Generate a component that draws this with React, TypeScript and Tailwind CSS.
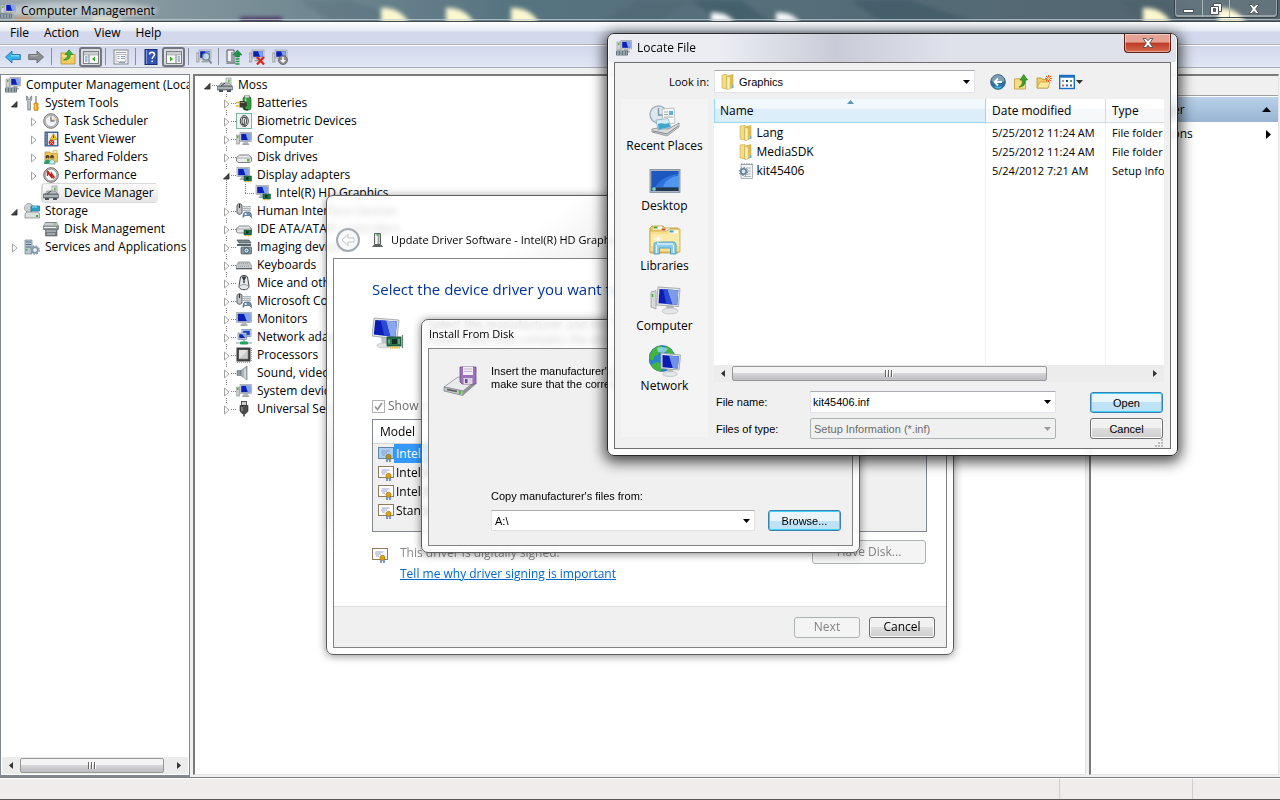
import type { ReactNode } from 'react';

/* ---------- icons ---------- */

type IconProps = { className?: string };

function Svg({ children, size = 16, className = '' }: { children: ReactNode; size?: number; className?: string }) {
  return (
    <svg viewBox={`0 0 ${size} ${size}`} width={size} height={size} className={`shrink-0 ${className}`} aria-hidden="true">
      {children}
    </svg>
  );
}

function Screen({ x = 3, y = 1, w = 12, h = 9 }: { x?: number; y?: number; w?: number; h?: number }) {
  return (
    <g>
      <path d={`M${x + w / 2 - 2} ${y + h}h4l1 3h-6z`} fill="#b9bdc0" />
      <rect x={x + w / 2 - 3.5} y={y + h + 2} width="7" height="1.4" fill="#9da2a6" />
      <rect x={x} y={y} width={w} height={h} fill="#d9dbdc" stroke="#8d9296" strokeWidth=".6" />
      <rect x={x + 1.2} y={y + 1.2} width={w - 2.4} height={h - 2.4} fill="#0a1fb8" />
      <path d={`M${x + w * 0.5} ${y + 1.2}H${x + w - 1.2}V${y + h - 1.2}H${x + w * 0.68}z`} fill="#7fa4f2" />
    </g>
  );
}

const ManagementIcon = ({ className }: IconProps) => (
  <Svg className={className}>
    <rect x="1" y="2" width="4" height="8" fill="#cfd3d5" stroke="#8e9498" strokeWidth=".6" />
    <rect x="2" y="3" width="1.5" height="2" fill="#5cb53a" />
    <Screen x={5} y={0.5} w={10.5} h={8.5} />
    <rect x="0" y="10.5" width="12" height="5" rx=".8" fill="#66757f" />
    <path d="M1 12h10M1 14h10" stroke="#c4ced4" strokeWidth="1" strokeDasharray="2 1" />
  </Svg>
);
const ToolsIcon = () => (
  <Svg>
    <path d="M2.500 1v4l1.300 1.400V15h2.600V6.400L7.700 5V1L6.300 2v2.300H4V2z" fill="#c9cdd0" stroke="#6f7579" strokeWidth=".8" />
    <path d="M12 1v7" stroke="#8b9094" strokeWidth="1.500" />
    <path d="M10.300 8h3.400l.6 2-.8 1 .8 1.500-.5 3h-3.600l-.5-3 .8-1.500-.8-1z" fill="#f3a51d" stroke="#b97008" strokeWidth=".6" />
    <path d="M11.300 9v6" stroke="#ffe08a" strokeWidth=".8" />
  </Svg>
);
const ClockIcon = () => (
  <Svg>
    <circle cx="8" cy="8" r="7.300" fill="#c8c8c8" stroke="#777" strokeWidth="1" />
    <circle cx="8" cy="8" r="5.600" fill="#f2f6fa" stroke="#8b8b8b" strokeWidth=".6" />
    <path d="M8 8l3.500-3.800A5.300 5.300 0 0 1 13 8z" fill="#f4cf9a" />
    <path d="M8 3.500V8h3.600" stroke="#4b5a66" strokeWidth="1.100" fill="none" />
  </Svg>
);
const EventIcon = () => (
  <Svg>
    <rect x="2" y="1" width="13" height="14" fill="#5577ae" stroke="#2e4978" strokeWidth=".8" />
    <rect x="5" y="2" width="9" height="12" fill="#e9eef6" />
    <path d="M1 3h3M1 6h3M1 9h3M1 12h3" stroke="#999" strokeWidth="1" />
    <path d="M10.500 2.500l3.500 6H7z" fill="#f6c612" stroke="#a77b05" strokeWidth=".5" />
    <path d="M10.500 4.500v2.500" stroke="#333" />
    <circle cx="8.500" cy="11.500" r="2.800" fill="#d32a22" />
    <path d="M7.500 10.500l2 2m0-2l-2 2" stroke="#fff" strokeWidth=".9" />
  </Svg>
);
const SharedIcon = () => (
  <Svg>
    <path d="M2 3h5l1 1.500h6.500V13H2z" fill="#efc758" stroke="#b48a26" strokeWidth=".7" />
    <path d="M10 1.500h4v3h-4z" fill="#fff2bd" stroke="#b48a26" strokeWidth=".5" />
    <circle cx="4.500" cy="8" r="2" fill="#5b3d25" />
    <circle cx="9" cy="8" r="2" fill="#5b3d25" />
    <path d="M4.500 8.500l1 1.500h-2zM9 8.500l1 1.500H8z" fill="#f2cfa4" />
    <path d="M1 15c0-3 2-4.500 3.700-4.500S7.500 12 7.500 15z" fill="#2a9c72" />
    <path d="M6 15c0-3 1.500-4.500 3.200-4.500S12 12 12 15z" fill="#d9e3ea" stroke="#2a9c72" strokeWidth=".6" />
  </Svg>
);
const PerformanceIcon = () => (
  <Svg>
    <circle cx="8" cy="8" r="7.300" fill="#bdbdbd" stroke="#6d6d6d" />
    <circle cx="8" cy="8" r="5.700" fill="#fff" stroke="#777" strokeWidth=".5" />
    <path d="M4.500 9V5l4 5V6.500l3 4.500" stroke="#d3221c" strokeWidth="1.500" fill="none" />
    <path d="M5 4l5.500 7.500" stroke="#8d1511" strokeWidth="1" />
  </Svg>
);
const DeviceIcon = () => (
  <Svg>
    <path d="M9 1h5v7H9z" fill="#e4e6e8" stroke="#8b9094" strokeWidth=".7" />
    <rect x="11" y="2.500" width="1.600" height="3" fill="#5cb53a" />
    <path d="M2 9l2-3h8l3 3z" fill="#b9bec2" stroke="#7a8086" strokeWidth=".6" />
    <rect x=".6" y="9" width="14.800" height="4" fill="#7b848b" stroke="#555d63" strokeWidth=".6" />
    <path d="M1 11h14" stroke="#d8dde0" />
    <path d="M2 13h4v2H2zM10 13h4v2h-4z" fill="#4a5157" />
    <path d="M4 9l4-3" stroke="#42484d" />
  </Svg>
);
const StorageIcon = () => (
  <Svg>
    <circle cx="5" cy="5" r="4.500" fill="#cfd4d7" stroke="#868d92" strokeWidth=".7" />
    <circle cx="5" cy="5" r="1.300" fill="#fff" stroke="#888" strokeWidth=".5" />
    <rect x="7" y="3" width="8.500" height="5" fill="#2aa0c9" stroke="#146f90" strokeWidth=".7" />
    <path d="M8 4h5" stroke="#a7e2f4" />
    <path d="M1 11l1.500-2h12l1 2v4H1z" fill="#dde0e2" stroke="#777d82" strokeWidth=".7" />
    <rect x="12" y="12" width="2" height="2" fill="#37ae32" />
  </Svg>
);
const DiskMgmtIcon = () => (
  <Svg>
    <path d="M2.500 1.500h11l2 3.500v3.500H.5V5z" fill="#8c9296" stroke="#666c70" strokeWidth=".7" />
    <path d="M2.500 2h11l1.500 2.500H1z" fill="#c9cdd0" />
    <path d="M1 6.500h12" stroke="#eceeef" />
    <path d="M2.500 9h11.500v6H2.500z" fill="#747a7f" stroke="#555b5f" strokeWidth=".6" />
    <path d="M3 10h10M4 13h8" stroke="#dfe1e3" strokeWidth=".9" />
    <rect x="10" y="2.500" width="3" height="1" fill="#6fc54b" />
  </Svg>
);
const ServicesIcon = () => (
  <Svg>
    <path d="M1 1h7v14H1z" fill="#bac7d0" stroke="#6e7f8b" strokeWidth=".7" />
    <path d="M2 3h5M2 5.500h5M2 8h5" stroke="#3f637b" strokeWidth=".9" />
    <rect x="2" y="10" width="1.500" height="1.500" fill="#37ae32" />
    <circle cx="11" cy="11" r="2.800" fill="#e7eef4" stroke="#7d97ad" strokeWidth="1.800" />
    <circle cx="11" cy="11" r="4.300" fill="none" stroke="#7d97ad" strokeWidth="1.200" strokeDasharray="1.800 1.600" />
  </Svg>
);
const BatteryIcon = () => (
  <Svg>
    <rect x="7" y="1.500" width="8" height="13.500" rx="2.500" fill="#2f9d3c" stroke="#1c5b25" strokeWidth=".7" />
    <rect x="8.500" y="0" width="5" height="3" rx="1" fill="#d5d8d5" stroke="#555" strokeWidth=".5" />
    <path d="M9.500 3.500v4" stroke="#a6e3a4" strokeWidth="1.500" />
    <path d="M3.500 6H8c2 0 3 1.500 3 3.200s-1 3.300-3 3.300H3.500z" fill="#3a3a33" />
    <path d="M4.500 7.500h4" stroke="#96968a" />
    <path d="M0 7.500h4M0 11h4" stroke="#d6b12b" strokeWidth="1.400" />
    <path d="M8 12c0 2 2 3 4 3" stroke="#222" strokeWidth="1.200" fill="none" />
  </Svg>
);
const BiometricIcon = () => (
  <Svg>
    <rect x=".5" y=".5" width="15" height="15" fill="#eef3f1" stroke="#7bb8a6" />
    <g fill="none" stroke="#333" strokeWidth=".9">
      <ellipse cx="8.300" cy="8" rx="4" ry="5.500" />
      <ellipse cx="8.300" cy="8" rx="2.400" ry="3.800" />
      <path d="M8.300 6v5M5 11l5 2M6 4l5 1" />
    </g>
  </Svg>
);
const ComputerIcon = () => (
  <Svg>
    <rect x="0" y="4" width="3.500" height="9" fill="#c9ced0" stroke="#868b8e" strokeWidth=".6" />
    <rect x="1" y="5" width="1.500" height="2" fill="#4db52d" />
    <Screen x={4} y={1.500} w={11.500} h={9} />
  </Svg>
);
const MonitorIcon = () => (
  <Svg>
    <Screen x={0.5} y={1.500} w={15} h={10} />
  </Svg>
);
const DriveIcon = () => (
  <Svg>
    <path d="M.5 8.500l3-2.500h9l3 2.500V12l-1.500 1.500H2L.5 12z" fill="#eceded" stroke="#6c7175" strokeWidth=".9" />
    <path d="M1 9h14" stroke="#a8adb0" />
    <rect x="11" y="10" width="2.500" height="2.500" fill="#52b53c" />
  </Svg>
);
const Chip = ({ x = 8, y = 9 }: { x?: number; y?: number }) => (
  <g>
    <rect x={x} y={y} width="7.500" height="5" fill="#147a49" stroke="#0b4a2b" strokeWidth=".5" />
    <rect x={x + 2} y={y + 1.2} width="2.500" height="2.500" fill="#10221a" />
    <path d={`M${x + 1} ${y + 5.6}h6`} stroke="#e0b32a" strokeWidth="1.200" strokeDasharray="1 .5" />
  </g>
);
const DisplayIcon = () => (
  <Svg>
    <Screen x={1} y={0.5} w={12.5} h={9} />
    <Chip />
  </Svg>
);
const IdeIcon = () => (
  <Svg>
    <path d="M.5 7.500l3-2.500h9l3 2.500v3.500l-1.500 1H2L.5 11z" fill="#e7e8e9" stroke="#6c7175" strokeWidth=".8" />
    <path d="M1 8h14" stroke="#a8adb0" />
    <Chip />
  </Svg>
);
const HidIcon = () => (
  <Svg>
    <path d="M1 3c0-3 5-3 5 0v6c0 3-5 3-5 0z" fill="#c2c6c9" stroke="#454a4e" strokeWidth=".9" />
    <path d="M3.500 1v4" stroke="#333" strokeWidth="1.200" />
    <path d="M7 3h8v5H7z" fill="#aeb6bd" />
    <path d="M7 4.500h8M7 6.500h8" stroke="#f5f6f7" strokeWidth=".9" strokeDasharray="1.500 .7" />
    <path d="M7 14.500c0-4 1-5.500 2.500-5.500h3.500c1.500 0 2.500 1.500 2.500 5.500l-2-2h-4.500z" fill="#6e8fae" stroke="#3c566e" strokeWidth=".6" />
    <circle cx="9.700" cy="11" r="1" fill="#fff" />
  </Svg>
);
const ImagingIcon = () => (
  <Svg>
    <path d="M1 1h12l2 3H3z" fill="#7f8b93" stroke="#40484d" strokeWidth=".7" />
    <path d="M1 5h14v2H1z" fill="#51646f" />
    <rect x="5" y="8" width="10.500" height="7" rx="1" fill="#8c9aa3" stroke="#414c54" strokeWidth=".7" />
    <circle cx="10.500" cy="11.500" r="2.600" fill="#e6f3fa" stroke="#2f4553" strokeWidth=".9" />
    <circle cx="10.500" cy="11.500" r="1" fill="#397eae" />
  </Svg>
);
const KeyboardIcon = () => (
  <Svg>
    <path d="M2.500 5h11l2.500 5v2H0v-2z" fill="#d0d3d5" stroke="#70767a" strokeWidth=".7" />
    <path d="M3 6.500h10M2.500 8h11M2 9.500h12" stroke="#8a9298" strokeWidth=".7" strokeDasharray="1.200 .8" />
    <path d="M0 11.500h16" stroke="#555b60" />
  </Svg>
);
const MouseIcon = () => (
  <Svg>
    <path d="M4.500 2c1-2 6-2 7 0l1.500 9c.5 5-10.500 5-10 0z" fill="#e7e8ea" stroke="#43484c" strokeWidth="1" />
    <path d="M5.500 1.500L8 6.500l2.500-5z" fill="#33373a" />
    <path d="M7 5.500h2V8H7z" fill="#5e6468" />
    <path d="M4 11c2-2 6-2 8 0" stroke="#999" fill="none" />
  </Svg>
);
const NetworkIcon = () => (
  <Svg>
    <rect x="6" y="0.500" width="9" height="7" fill="#d5e0ee" stroke="#6f85a8" strokeWidth=".7" />
    <rect x="7.200" y="1.700" width="6.600" height="4.600" fill="#1a3fc8" />
    <rect x="2" y="4" width="8.500" height="6.500" fill="#d5e0ee" stroke="#6f85a8" strokeWidth=".7" />
    <rect x="3.200" y="5.200" width="6.100" height="4" fill="#0b25ad" />
    <path d="M6 5.200h3.300v4z" fill="#8bacf2" />
    <path d="M0 14h16M8 11v3" stroke="#8b9aa0" strokeWidth="1.200" />
    <rect x="4" y="12.500" width="8" height="3" rx="1" fill="#18a65c" />
  </Svg>
);
const CpuIcon = () => (
  <Svg>
    <path d="M1 15.500h14M15.500 1v14" stroke="#c9a34a" strokeDasharray="1 1" />
    <rect x=".5" y=".5" width="14" height="14" fill="#3e3e3e" />
    <rect x="3" y="3" width="9" height="9" fill="#c9c9c9" stroke="#888" strokeWidth=".6" />
    <path d="M3 3h9L3 12z" fill="#e2e2e2" />
  </Svg>
);
const SoundIcon = () => (
  <Svg>
    <path d="M1 5.500h4v5H1z" fill="#8c979f" stroke="#5b656c" strokeWidth=".5" />
    <path d="M5 5.500L11 1v14l-6-4.500z" fill="#a9b4bb" stroke="#66717a" strokeWidth=".6" />
    <path d="M9 3.500v10" stroke="#e9eef1" strokeWidth="1.200" />
  </Svg>
);
const UsbIcon = () => (
  <Svg>
    <rect x="5.500" y="0.500" width="5" height="4" fill="#cdcdcd" stroke="#444" strokeWidth=".9" />
    <path d="M4 4.500h8V10l-2 2.500H6L4 10z" fill="#4c4c4c" stroke="#222" strokeWidth=".6" />
    <path d="M6 6v4" stroke="#aaa" />
    <path d="M8 12v3.500" stroke="#333" strokeWidth="1.500" />
  </Svg>
);
const CertificateIcon = ({ selected = false }: { selected?: boolean }) => (
  <Svg>
    <rect x=".5" y="1.500" width="15" height="11" fill={selected ? '#a9cff3' : '#fff'} stroke={selected ? '#6386a8' : '#927b5c'} />
    <path d="M3.500 5h8M3 7h6M4 9h3" stroke="#8a93c9" strokeWidth=".9" />
    <path d="M9 12v4M12 12v4" stroke="#3266c9" strokeWidth="1.300" />
    <circle cx="10.500" cy="10.800" r="2.600" fill={selected ? '#a39233' : '#dda117'} stroke="#9a6a06" strokeWidth=".6" />
  </Svg>
);
const FolderIcon = ({ className }: IconProps) => (
  <Svg className={className}>
    <path d="M2 1l5-.6V15l-5-1z" fill="#f3dc86" stroke="#c9a945" strokeWidth=".6" />
    <path d="M7 2l6-1.400v13L7 15.500z" fill="#e0bf57" stroke="#b9963a" strokeWidth=".5" />
    <path d="M7 2.500l3 .8V15l-3 .6z" fill="#fff0ae" stroke="#cdb057" strokeWidth=".4" />
    <path d="M12.700 11v3" stroke="#55b3e6" strokeWidth="1.200" />
  </Svg>
);
const IniIcon = () => (
  <Svg>
    <path d="M3 1.500h11.500v14H3z" fill="#f2f4f5" stroke="#8f979c" strokeWidth=".7" />
    <path d="M3 1h12" stroke="#777f84" strokeDasharray="1.500 1" />
    <path d="M8 5h5M9 8h4M9 11h4M6 13.500h7" stroke="#9ba4aa" strokeWidth=".8" />
    <circle cx="5.500" cy="8.500" r="2.700" fill="#dce8f1" stroke="#5e7d96" strokeWidth="1.600" />
    <circle cx="5.500" cy="8.500" r="4.200" fill="none" stroke="#5e7d96" strokeWidth="1" strokeDasharray="1.600 1.600" />
  </Svg>
);

/* toolbar */
const ArrowIcon = ({ forward = false }: { forward?: boolean }) => (
  <Svg>
    <path
      d={forward ? 'M15.500 8L9 2v3.500H.7v5H9V14z' : 'M.5 8L7 2v3.500h8.300v5H7V14z'}
      fill={forward ? '#8b8f92' : '#35b2ec'}
      stroke={forward ? '#65696c' : '#2477ab'}
      strokeWidth=".9"
    />
    <path d={forward ? 'M2 6.800h8' : 'M6 6.800h8'} stroke={forward ? '#b9bcbe' : '#a2e0fa'} strokeWidth="1" />
  </Svg>
);
const UpFolderIcon = () => (
  <Svg>
    <path d="M1 4h5l1.500 1.500H15V15H1z" fill="#f2cb61" stroke="#b5902f" strokeWidth=".8" />
    <path d="M2 7h12" stroke="#fdeebb" />
    <path d="M3.500 11c3-1 4-3 4-5.500H5L9 .8 13 5.500h-2.600c0 4-2.500 6-6.900 5.500z" fill="#3db534" stroke="#1f7a1b" strokeWidth=".6" />
  </Svg>
);
const PaneIcon = ({ right = false }: { right?: boolean }) => (
  <Svg>
    <rect x=".5" y="2.500" width="15" height="12" fill="#fafafa" stroke="#7b8085" />
    <path d="M1 4h14M1 5.800h14" stroke="#9298a0" strokeWidth=".9" />
    <path d={right ? 'M10 6v8' : 'M6 6v8'} stroke="#7b8085" />
    <path d={right ? 'M11.500 8h2.500M11.500 10h2.500M11.500 12h2.500' : 'M2 8h2.500M2 10h2.500M2 12h2.500'} stroke="#4a7bc5" />
    <path d={right ? 'M4 7.500v5L7 10z' : 'M12 7.500v5L9 10z'} fill="#38a820" />
  </Svg>
);
const PropertiesIcon = () => (
  <Svg>
    <rect x="1" y="1" width="14" height="14" fill="#f4f5f6" stroke="#858a90" />
    <path d="M3 3.500h10" stroke="#a2a8af" />
    <rect x="3" y="5.500" width="10" height="7" fill="#fff" stroke="#a5abb1" strokeWidth=".7" />
    <path d="M4.500 7.500h2M4.500 9.500h2M8 7.500h4M8 9.500h4M6 13.500h6" stroke="#7e92ab" strokeWidth=".9" />
  </Svg>
);
const HelpIcon = () => (
  <Svg>
    <rect x="2" y=".5" width="12" height="15" fill="#3454b4" stroke="#1b2e71" />
    <path d="M3.500 1v14" stroke="#7c97df" />
    <path d="M6.500 5.500c0-3 5-3 5 0 0 2-2.300 2-2.300 4.500M9.200 11.500v1.800" stroke="#fff" strokeWidth="1.500" fill="none" />
  </Svg>
);
const ScanIcon = () => (
  <Svg>
    <rect x="0" y="4" width="3" height="9" fill="#c9ced0" stroke="#777" strokeWidth=".5" />
    <Screen x={3} y={1} w={12} h={9} />
    <circle cx="10" cy="7.500" r="3.500" fill="#d5eaf8" fillOpacity=".85" stroke="#5d7588" strokeWidth="1.100" />
    <path d="M12.500 10.500l3 4" stroke="#7d868d" strokeWidth="2" />
  </Svg>
);
const UpdateIcon = () => (
  <Svg>
    <path d="M1 1h7v12H1z" fill="#eef0f1" stroke="#55595c" />
    <path d="M5 3h2v9H5z" fill="#97a09f" />
    <path d="M0 15h10l-1-2H1z" fill="#8d9396" />
    <path d="M11.500 1l4.500 5h-2.500v2h-4V6H7z" fill="#21924a" stroke="#0e6530" strokeWidth=".5" />
    <path d="M9.500 10h4M9.500 12.500h4M9.500 15h4" stroke="#21924a" strokeWidth="1.400" />
  </Svg>
);
const UninstallIcon = () => (
  <Svg>
    <rect x="0" y="4" width="3" height="9" fill="#c9ced0" stroke="#777" strokeWidth=".5" />
    <Screen x={3} y={1} w={12} h={8} />
    <path d="M8 8l7 7.500M15 8l-7 7.500" stroke="#db241c" strokeWidth="2.200" />
  </Svg>
);
const DisableIcon = () => (
  <Svg>
    <rect x="0" y="4" width="3" height="9" fill="#c9ced0" stroke="#777" strokeWidth=".5" />
    <Screen x={3} y={1} w={12} h={8} />
    <circle cx="11" cy="11" r="4.500" fill="#8c8c8c" stroke="#606060" strokeWidth=".8" />
    <path d="M10.200 8h1.600v3H14l-3 3-3-3h2.200z" fill="#fff" />
  </Svg>
);

/* file dialog */
const BackOrb = () => (
  <Svg>
    <circle cx="8" cy="8" r="7.400" fill="#2b719e" stroke="#44687f" strokeWidth=".9" />
    <path d="M1.500 7a6.500 6 0 0 1 13 0c-4 2-9 2-13 0z" fill="#7f9fb4" />
    <path d="M4 12.500c2 3 6 3 8 0z" fill="#3fb6e4" />
    <path d="M12 8H5M8 4.500L4.500 8 8 11.500" stroke="#fff" strokeWidth="1.800" fill="none" />
  </Svg>
);
const UpLevelIcon = () => (
  <Svg>
    <path d="M1.500 5l5-.5 1 1.500h5v9h-11z" fill="#f5dc80" stroke="#c09a34" strokeWidth=".8" />
    <path d="M6 13c3-1 3.500-4 3.300-7H7l3.700-5.500L14.500 6h-2.300c0 5-2 7-6.200 7z" fill="#37a627" stroke="#1e6d16" strokeWidth=".6" />
  </Svg>
);
const NewFolderIcon = () => (
  <Svg>
    <path d="M1 4h4.500l1 1.500H12V14H1z" fill="#efcb63" stroke="#b98f2c" strokeWidth=".8" />
    <path d="M1 14l3-6h10l-2 6z" fill="#fbe99c" stroke="#b98f2c" strokeWidth=".6" />
    <path d="M12.500 1v7M9 4.500h7M10 2l5 5M15 2l-5 5" stroke="#f0552a" strokeWidth="1" />
    <circle cx="12.500" cy="4.500" r="1.300" fill="#fff27c" />
  </Svg>
);
const ViewsIcon = () => (
  <Svg>
    <rect x=".7" y="1.500" width="14.600" height="13" fill="#fff" stroke="#1d6dc5" strokeWidth="1.400" />
    <path d="M0 2.500h16" stroke="#1d6dc5" strokeWidth="2.400" />
    <path d="M3 6h2v2H3z" fill="#9d9d9d" />
    <path d="M7 6h2v2H7z" fill="#1f3f93" />
    <path d="M11 6h2v2h-2z" fill="#48a348" />
    <path d="M3 10.500h2v2H3z" fill="#df5f45" />
    <path d="M7 10.500h2v2H7z" fill="#2d62bd" />
    <path d="M11 10.500h2v2h-2z" fill="#3b58a4" />
  </Svg>
);
const BigScreen = () => (
  <g>
    <path d="M17 20l6-1 3 6-8 1z" fill="#b6b9bc" />
    <ellipse cx="21" cy="26" rx="8" ry="3" fill="#e4e5e6" stroke="#b0b4b7" strokeWidth=".6" />
    <path d="M9 2l22 1.500-1.500 18L7.500 20z" fill="#e3e5e6" stroke="#999ea2" strokeWidth=".8" />
    <path d="M10.500 4l18.800 1.200L28.200 19.800 9.500 18.300z" fill="#0b1cb5" />
    <path d="M18 4.500l11.300.7L28.200 19.800l-5-.4z" fill="#7c9bea" />
    <path d="M14 4.200l4.500.3 4.800 14.900-6-.4z" fill="#2a49d4" />
  </g>
);
const BigComputer = () => (
  <Svg size={32}>
    <path d="M2 7l5-1.500V24l-5-2z" fill="#d6d8da" stroke="#94999d" strokeWidth=".7" />
    <path d="M3.500 9v3" stroke="#42b82c" strokeWidth="1.600" />
    <BigScreen />
  </Svg>
);
const BigDisplay = () => (
  <Svg size={32}>
    <path d="M9 20l8 1 2 6-9 1z" fill="#c0c3c6" />
    <ellipse cx="12" cy="28.500" rx="7" ry="2.500" fill="#e2e3e4" stroke="#b0b4b7" strokeWidth=".6" />
    <path d="M2 1l25 2-2 19L0 19z" fill="#e3e5e6" stroke="#999ea2" strokeWidth=".8" />
    <path d="M3.300 3L25 4.500 23.300 20 1.800 17.500z" fill="#0b1cb5" />
    <path d="M14 3.700L25 4.500 23.300 20l-5-.6z" fill="#88a5f0" />
    <path d="M8.500 3.300l5.500.4 4.300 15.700-6-.7z" fill="#2a49d4" />
    <rect x="15" y="20" width="14" height="9" fill="#24754d" stroke="#114a2e" strokeWidth=".8" />
    <rect x="20" y="22" width="5" height="5" fill="#152c20" />
    <path d="M17 22.500v4M27 22v5" stroke="#8ac1a4" strokeWidth="1.200" />
    <path d="M18 30.500h10" stroke="#dfb32d" strokeWidth="2" strokeDasharray="1.500 .6" />
    <path d="M30.500 18v13" stroke="#72777a" strokeWidth="1.200" />
  </Svg>
);
const BigNetwork = () => (
  <Svg size={32}>
    <circle cx="13" cy="13.500" r="13" fill="#2b83cb" stroke="#23639a" strokeWidth=".6" />
    <path d="M3 6C6 2 10 0 13 1c1 3-2 4-3 7s-5 2-5 5-3 2-4.500 1C0 11 1 8 3 6zM6 18c3-2 6 0 7 3s-1 4-1 5.500C8 26 4 24 2 20zM17 1c4 1 7 5 8 8l-5 1-4-4z" fill="#43b53c" />
    <path d="M8 3c4-2 9-1 11 1l-4 4-6-1z" fill="#a8e3f4" fillOpacity=".7" />
    <path d="M18 24l5-.5 2 4-6 .5z" fill="#b6b9bc" />
    <ellipse cx="21" cy="29" rx="7.500" ry="2.500" fill="#e4e5e6" stroke="#b0b4b7" strokeWidth=".6" />
    <path d="M12 8l19.500 2-1.500 15-18-1.500z" fill="#e3e5e6" stroke="#999ea2" strokeWidth=".8" />
    <path d="M13.500 10L30 11.500l-1.300 12-15.200-1.300z" fill="#0b1cb5" />
    <path d="M20 10.600l10 .9-1.300 12-5-.4z" fill="#6f92e8" />
  </Svg>
);
const BigDesktop = () => (
  <Svg size={32}>
    <rect x="1" y="4.500" width="30" height="23" fill="#a9b4c0" stroke="#7f8b97" strokeWidth=".8" />
    <rect x="2.500" y="6" width="27" height="20" fill="#2c74dc" />
    <path d="M2.500 6h27v3C18 10 9 16 6 23H2.500z" fill="#1c58bf" />
    <path d="M14 22c2-7 9-11 15.500-11v11z" fill="#5095ee" />
    <rect x="2.500" y="22.500" width="27" height="3.500" fill="#22384f" />
    <circle cx="5" cy="24" r="2" fill="#4fc2e6" />
    <circle cx="5" cy="24" r=".8" fill="#f5d447" />
  </Svg>
);
const BigLibraries = () => (
  <Svg size={32}>
    <path d="M1 3l2-2h11l2 2h13v25H1z" fill="#e9c867" stroke="#bd9a3b" strokeWidth=".8" />
    <path d="M4 1.500h9v3H4z" fill="#fff" />
    <path d="M4.500 1.500h4v2h-4z" fill="#32ae38" />
    <path d="M12 3.500h9v3h-9z" fill="#fff" />
    <path d="M12.500 3.500h4v2h-4z" fill="#d24a2f" />
    <path d="M1 6h17l2-2h11v23H1z" fill="#f7df8c" stroke="#c8a546" strokeWidth=".7" />
    <path d="M20 5.500h9v3h-9z" fill="#fff" />
    <path d="M20.500 5.500h4v2h-4z" fill="#31a0e2" />
    <path d="M2 9h28v12H2z" fill="#fbeaa8" />
    <path d="M5 29V20c0-2 1-3 3-3h16c2 0 3 1 3 3v9h-5.500v-6h-11v6z" fill="#8cccea" stroke="#4d9cc3" strokeWidth=".9" />
    <path d="M7.500 20v8M24.500 20v8M8 19h16" stroke="#d8f1fb" strokeWidth="1.300" />
    <path d="M9 10v8M5 14h8M6.500 11.500l5 5M11.500 11.500l-5 5" stroke="#fff" strokeWidth=".9" />
  </Svg>
);
const BigRecent = () => (
  <Svg size={32}>
    <circle cx="9.500" cy="9.500" r="8.500" fill="#dde7ee" stroke="#9fb0bc" strokeWidth="1.400" />
    <path d="M9.500 3v7h6" stroke="#7b91a0" strokeWidth="1.300" fill="none" />
    <path d="M13 4l12-1 1 15-12 2z" fill="#f7f8f9" stroke="#a8adb2" strokeWidth=".7" />
    <path d="M15 7h4M15 9.500h4M15 12h9" stroke="#99a2a9" strokeWidth=".9" />
    <path d="M20 6h4v4h-4z" fill="#5bb3d6" />
    <path d="M3 24l6-1 10 1 11-6v4l-12 9-15-4z" fill="#d9dbdd" stroke="#85898d" strokeWidth=".8" />
    <path d="M7 15l12-1.500 3 9-13 2.500z" fill="#d6eef9" stroke="#8297a3" strokeWidth=".6" />
    <path d="M9 19c4-2 6 1 11-1l1.500 4-12 2.500z" fill="#41a6cf" />
    <path d="M4 26l14 3 11-8" stroke="#7f8387" fill="none" />
  </Svg>
);
const FloppyDriveIcon = () => (
  <svg viewBox="0 0 36 32" width="36" height="32" className="shrink-0" aria-hidden="true">
    <path d="M1 22l14-10 17 4-12 10z" fill="#e9eaeb" stroke="#8b8f92" strokeWidth=".8" />
    <path d="M1 22l19 4v4.500L1 26z" fill="#c6c9cb" stroke="#808487" strokeWidth=".8" />
    <path d="M20 26l12-10v4L20 30.500z" fill="#8f9396" />
    <path d="M4 24.500l10 2" stroke="#55595c" strokeWidth="1.300" />
    <path d="M17 26v3" stroke="#4dc229" strokeWidth="2.400" />
    <path d="M17 2h16v17H19l-2-2z" fill="#9a72b9" stroke="#6f4a8e" strokeWidth=".8" />
    <path d="M20 2h10v8H20z" fill="#f0ebf4" />
    <path d="M21 4h8M21 6.500h8" stroke="#b8aac4" strokeWidth=".8" />
    <path d="M20.500 13h9v6h-9z" fill="#dcd4e4" />
    <path d="M22 14h2.500v4H22z" fill="#6f4a8e" />
  </svg>
);
const TowerIcon = () => (
  <Svg>
    <path d="M4.500 1.500h6v11h-6z" fill="#d7dad9" stroke="#5b5f60" />
    <path d="M5.500 3H7v9H5.500z" fill="#fff" />
    <path d="M8.500 4v8" stroke="#a3aca2" strokeWidth="1.500" />
    <path d="M6.500 3h3" stroke="#40a83a" strokeWidth="1.500" />
    <path d="M2 15h11l-1.500-2h-8z" fill="#5d6263" />
  </Svg>
);

const Down = ({ className = 'fill-black' }: IconProps) => (
  <svg viewBox="0 0 7 4" width="7" height="4" className={`shrink-0 ${className}`} aria-hidden="true">
    <path d="M0 0h7L3.500 4z" />
  </svg>
);

/* ---------- shared controls ---------- */

function PushButton({
  children,
  className = '',
  primary = false,
  disabled = false,
}: {
  children: ReactNode;
  className?: string;
  primary?: boolean;
  disabled?: boolean;
}) {
  const look = disabled
    ? 'border-[#adb2b5] bg-[#f4f4f4] text-[#838383]'
    : primary
      ? 'border-[#3c7fb1] bg-linear-to-b from-[#eaf5fb] from-50% to-[#bfe3f6] to-50% shadow-[inset_0_0_0_1px_#3fd0f8] text-black'
      : 'border-[#707070] bg-linear-to-b from-[#f1f1f1] from-45% via-[#dddddd] via-50% to-[#cfcfcf] shadow-[inset_0_0_0_1px_#fbfbfb] text-black';
  return (
    <button type="button" disabled={disabled} className={`flex items-center justify-center rounded-[3px] border ${look} ${className}`}>
      {children}
    </button>
  );
}

function ScrollBar({ thumb }: { thumb: string }) {
  return (
    <div className="flex h-[17px] shrink-0 items-center bg-[#ececec]">
      <button type="button" aria-label="Scroll left" className="flex w-[18px] shrink-0 items-center justify-center">
        <svg viewBox="0 0 4 7" width="4" height="7">
          <path d="M4 0v7L0 3.500z" fill="#333" />
        </svg>
      </button>
      <div className="flex h-full flex-1">
        <div
          className={`flex h-[15px] items-center justify-center gap-px self-center rounded-[2px] border border-[#979797] bg-linear-to-b from-[#f3f3f3] from-45% via-[#d5d5d8] via-50% to-[#bdbdc2] ${thumb}`}
        >
          <span className="h-[7px] w-[2px] border-r border-white bg-[#666]" />
          <span className="h-[7px] w-[2px] border-r border-white bg-[#666]" />
          <span className="h-[7px] w-[2px] border-r border-white bg-[#666]" />
        </div>
      </div>
      <button type="button" aria-label="Scroll right" className="flex w-[18px] shrink-0 items-center justify-center">
        <svg viewBox="0 0 4 7" width="4" height="7">
          <path d="M0 0v7l4-3.500z" fill="#333" />
        </svg>
      </button>
    </div>
  );
}

/* ---------- trees ---------- */

type Node = { label: string; icon: ReactNode; level: number; arrow?: 'open' | 'closed'; selected?: boolean; last?: boolean };

const consoleTree: Node[] = [
  { label: 'Computer Management (Local', icon: <ManagementIcon />, level: 0 },
  { label: 'System Tools', icon: <ToolsIcon />, level: 1, arrow: 'open' },
  { label: 'Task Scheduler', icon: <ClockIcon />, level: 2, arrow: 'closed' },
  { label: 'Event Viewer', icon: <EventIcon />, level: 2, arrow: 'closed' },
  { label: 'Shared Folders', icon: <SharedIcon />, level: 2, arrow: 'closed' },
  { label: 'Performance', icon: <PerformanceIcon />, level: 2, arrow: 'closed' },
  { label: 'Device Manager', icon: <DeviceIcon />, level: 2, selected: true },
  { label: 'Storage', icon: <StorageIcon />, level: 1, arrow: 'open' },
  { label: 'Disk Management', icon: <DiskMgmtIcon />, level: 2 },
  { label: 'Services and Applications', icon: <ServicesIcon />, level: 1, arrow: 'closed' },
];

const deviceTree: Node[] = [
  { label: 'Moss', icon: <DeviceIcon />, level: 1, arrow: 'open' },
  { label: 'Batteries', icon: <BatteryIcon />, level: 2, arrow: 'closed' },
  { label: 'Biometric Devices', icon: <BiometricIcon />, level: 2, arrow: 'closed' },
  { label: 'Computer', icon: <ComputerIcon />, level: 2, arrow: 'closed' },
  { label: 'Disk drives', icon: <DriveIcon />, level: 2, arrow: 'closed' },
  { label: 'Display adapters', icon: <DisplayIcon />, level: 2, arrow: 'open' },
  { label: 'Intel(R) HD Graphics', icon: <DisplayIcon />, level: 3 },
  { label: 'Human Interface Devices', icon: <HidIcon />, level: 2, arrow: 'closed' },
  { label: 'IDE ATA/ATAPI controllers', icon: <IdeIcon />, level: 2, arrow: 'closed' },
  { label: 'Imaging devices', icon: <ImagingIcon />, level: 2, arrow: 'closed' },
  { label: 'Keyboards', icon: <KeyboardIcon />, level: 2, arrow: 'closed' },
  { label: 'Mice and oth', icon: <MouseIcon />, level: 2, arrow: 'closed' },
  { label: 'Microsoft Co', icon: <HidIcon />, level: 2, arrow: 'closed' },
  { label: 'Monitors', icon: <MonitorIcon />, level: 2, arrow: 'closed' },
  { label: 'Network adap', icon: <NetworkIcon />, level: 2, arrow: 'closed' },
  { label: 'Processors', icon: <CpuIcon />, level: 2, arrow: 'closed' },
  { label: 'Sound, video', icon: <SoundIcon />, level: 2, arrow: 'closed' },
  { label: 'System devic', icon: <ComputerIcon />, level: 2, arrow: 'closed' },
  { label: 'Universal Seri', icon: <UsbIcon />, level: 2, arrow: 'closed', last: true },
];

function TreeCell({ node, lines, trunk }: { node?: Node; lines: boolean; trunk: boolean }) {
  const arrow = node?.arrow;
  return (
    <svg viewBox="0 0 19 18" width="19" height="18" className="shrink-0" aria-hidden="true">
      {trunk && <path d={node?.last ? 'M9.500 0v9' : 'M9.500 0v18'} stroke="#808080" strokeDasharray="1 1" />}
      {lines && <path d={arrow ? 'M14 9.500h5' : 'M9 9.500h10'} stroke="#808080" strokeDasharray="1 1" />}
      {lines && !arrow && node && <path d="M9.500 0v9" stroke="#808080" strokeDasharray="1 1" />}
      {arrow === 'closed' && (
        <>
          <rect x="6" y="4" width="8" height="11" fill="#fff" />
          <path d="M7.500 6v8L12 10z" fill="#fff" stroke="#a3a3a3" />
        </>
      )}
      {arrow === 'open' && (
        <>
          <rect x="5" y="4" width="9" height="9" fill="#fff" />
          <path d="M12 7.500V13H6.500z" fill="#454545" stroke="#202020" strokeWidth=".8" />
        </>
      )}
    </svg>
  );
}

function Tree({ nodes, lines = false }: { nodes: Node[]; lines?: boolean }) {
  return (
    <ul>
      {nodes.map((n) => (
        <li key={n.label} className="flex h-[18px] items-center whitespace-nowrap">
          {n.level >= 2 && (!lines || n.level === 2) && <span className="w-[19px] shrink-0" />}
          {lines && n.level === 3 && (
            <>
              <span className="w-[19px] shrink-0" />
              <TreeCell lines={false} trunk />
            </>
          )}
          {n.level > 0 && <TreeCell node={n} lines={lines} trunk={lines && n.level === 2} />}
          <span
            className={`flex h-[18px] items-center gap-[5px] rounded-[3px] ${
              n.selected ? 'bg-linear-to-b from-[#fafafa] to-[#e6e6e6] pr-1 shadow-[-1px_0_0_1px_#d9d9d9]' : ''
            }`}
          >
            {n.icon}
            {n.label}
          </span>
        </li>
      ))}
    </ul>
  );
}

/* ---------- main window ---------- */

const Separator = () => <span className="mx-1 h-[17px] w-px bg-[#8b8e9b]" />;

function ToolButton({ label, pressed = false, children }: { label: string; pressed?: boolean; children: ReactNode }) {
  return (
    <button
      type="button"
      aria-label={label}
      className={
        pressed
          ? 'flex h-5 w-[23px] items-center justify-center rounded-[3px] border-2 border-[#73767f] bg-[#d9dbe3]'
          : 'flex h-5 w-[23px] items-center justify-center'
      }
    >
      {children}
    </button>
  );
}

function TitleBar() {
  return (
    <header className="relative flex h-[22px] shrink-0 items-center overflow-hidden border-b border-[#3f4a50] bg-linear-to-r from-[#9aa7ad] via-[#567480] via-40% to-[#52636d]">
      <svg viewBox="0 0 1280 22" preserveAspectRatio="none" className="absolute inset-0 h-full w-full" aria-hidden="true">
        <defs>
          <filter id="soft" x="-20%" y="-50%" width="140%" height="200%">
            <feGaussianBlur stdDeviation="2" />
          </filter>
        </defs>
        <path d="M300 0h50l60 22h-80zM640 0h50l-30 22h-60zM1120 0h60l40 22h-80z" fill="#3f5762" opacity=".2" filter="url(#soft)" />
        <path d="M690 0h50l30 22h-50zM850 0h60l60 22H880z" fill="#2f4b5a" opacity=".4" filter="url(#soft)" />
        <ellipse cx="80" cy="11" rx="78" ry="9" fill="#dfe5e7" opacity=".55" filter="url(#soft)" />
        <g filter="url(#soft)">
          <path d="M16 18h16v6H16z" fill="#e08b4c" opacity=".7" />
          <path d="M92 18h28v6H92z" fill="#f4eeda" />
          <path d="M240 18h42v6h-42z" fill="#47305f" />
          <path d="M381 8c12 0 22 4 28 16h-28zM446 8c12 0 22 4 28 16h-28zM511 8c12 0 22 4 28 16h-28zM1143 8c12 0 22 4 28 16h-28zM1218 8c12 0 22 4 28 16h-28z" fill="#fbf8cf" />
          <path d="M711 13c12 0 18 2 24 11h-24zM776 13c12 0 18 2 24 11h-24z" fill="#f5f7f8" />
        </g>
        <path d="M0 20.500h1280" stroke="#c9d2d6" strokeWidth="1" opacity=".8" />
      </svg>
      <div className="relative flex flex-1 items-center gap-[5px]">
        <ManagementIcon />
        <h1 className="text-black">Computer Management</h1>
      </div>
      <div className="relative mr-[2px] flex h-[18px] self-start overflow-hidden rounded-b-[4px] border border-t-0 border-[#37434a] bg-white/10 shadow-[inset_0_-1px_0_1px_rgba(255,255,255,0.35)]">
        <button type="button" aria-label="Minimize" className="flex w-[28px] items-center justify-center border-r border-[#aab5ba]">
          <span className="mt-1 h-1 w-[11px] border border-[#4a555b] bg-white" />
        </button>
        <button type="button" aria-label="Restore" className="flex w-[27px] items-center justify-center border-r border-[#aab5ba]">
          <svg viewBox="0 0 12 12" width="12" height="12">
            <path d="M3.500.5h8v8h-3v3h-8v-8h3z" fill="#fff" stroke="#4a555b" />
            <path d="M3.500 5.500h2v3h-2z" fill="#5d6b73" stroke="#4a555b" />
            <path d="M3.500 3.500h5v5" fill="none" stroke="#4a555b" />
          </svg>
        </button>
        <button type="button" aria-label="Close" className="flex w-[47px] items-center justify-center">
          <CloseGlyph />
        </button>
      </div>
    </header>
  );
}

const CloseGlyph = () => (
  <svg viewBox="0 0 12 10" width="12" height="10" aria-hidden="true">
    <path d="M1 .5h3l2 2.200L8 .5h3L7.700 5 11 9.500H8L6 7.200 4 9.500H1L4.300 5z" fill="#fff" stroke="#4d5156" strokeWidth=".9" />
  </svg>
);

function MainWindow() {
  return (
    <div className="flex h-full w-full flex-col">
      <TitleBar />
      <nav className="flex h-[23px] shrink-0 items-center gap-[15px] border-b border-[#b3b3ba] bg-linear-to-b from-white via-[#e6ebf5] via-40% to-[#d3d8ec] to-45% pl-[10px]">
        {['File', 'Action', 'View', 'Help'].map((m) => (
          <button key={m} type="button">
            {m}
          </button>
        ))}
      </nav>
      <div className="flex h-[23px] shrink-0 items-center border-t border-b border-t-white border-b-[#a9acb8] bg-linear-to-b from-[#d3d8ec] to-[#e0e6f4] pl-[1px]">
        <ToolButton label="Back"><ArrowIcon /></ToolButton>
        <ToolButton label="Forward"><ArrowIcon forward /></ToolButton>
        <Separator />
        <ToolButton label="Up one level"><UpFolderIcon /></ToolButton>
        <ToolButton label="Console tree" pressed><PaneIcon /></ToolButton>
        <span className="ml-[3px] h-[17px] w-px bg-[#8b8e9b]" />
        <span className="w-[3px]" />
        <ToolButton label="Properties"><PropertiesIcon /></ToolButton>
        <span className="mx-[3px] h-[17px] w-px bg-[#8b8e9b]" />
        <ToolButton label="Help"><HelpIcon /></ToolButton>
        <ToolButton label="Action pane" pressed><PaneIcon right /></ToolButton>
        <span className="mx-[3px] h-[17px] w-px bg-[#8b8e9b]" />
        <ToolButton label="Scan for hardware changes"><ScanIcon /></ToolButton>
        <span className="mx-[3px] h-[17px] w-px bg-[#8b8e9b]" />
        <ToolButton label="Update driver"><UpdateIcon /></ToolButton>
        <ToolButton label="Uninstall"><UninstallIcon /></ToolButton>
        <ToolButton label="Disable"><DisableIcon /></ToolButton>
      </div>
      <main className="flex min-h-0 flex-1 gap-[3px] bg-[#f0f0f0] pt-[6px]">
        <section className="flex w-[190px] shrink-0 flex-col border border-b-2 border-[#828790] bg-white">
          <div className="flex-1 overflow-hidden pt-px pl-1">
            <Tree nodes={consoleTree} />
          </div>
          <div className="px-px pb-px">
            <ScrollBar thumb="w-[144px]" />
          </div>
        </section>
        <section className="mb-[2px] min-w-0 flex-1 overflow-hidden border-t-2 border-r border-b border-l-2 border-t-[#7a7a7a] border-r-[#e3e3e3] border-b-[#e3e3e3] border-l-[#7a7a7a] bg-white pl-[3px]">
          <Tree nodes={deviceTree} lines />
        </section>
        <section className="mr-px mb-[2px] w-[190px] shrink-0 border-t-2 border-r border-b border-l-2 border-t-[#7a7a7a] border-r-[#e3e3e3] border-b-[#e3e3e3] border-l-[#7a7a7a] bg-white">
          <div className="h-5 border-b border-[#a0a0a0] bg-[#f0f0f0]" />
          <button type="button" className="mt-px flex h-[25px] w-full items-center justify-between bg-linear-to-b from-[#b9d1ea] to-[#99b4d1] pr-[7px] pl-1">
            Device Manager
            <svg viewBox="0 0 9 5" width="9" height="5">
              <path d="M0 5h9L4.500 0z" />
            </svg>
          </button>
          <button type="button" className="flex h-6 w-full items-center justify-between pr-[7px] pl-7">
            More Actions
            <svg viewBox="0 0 5 9" width="5" height="9">
              <path d="M0 0v9l5-4.500z" />
            </svg>
          </button>
        </section>
      </main>
      <footer className="flex h-[23px] shrink-0 border-t border-b border-t-[#7f7f83] border-b-[#5a5756] bg-[#f0eceb]">
        <span className="flex-1 border-t border-white" />
        <span className="w-[134px] border-t border-r border-l border-t-white border-r-[#d0cfcf] border-l-[#d0cfcf]" />
        <span className="w-[87px] border-t border-white" />
      </footer>
    </div>
  );
}

/* ---------- dialogs ---------- */

const models = ['Intel(R) HD Graphics', 'Intel(R) HD Graphics ', 'Intel(R) HD Graphics  ', 'Standard VGA Graphics Adapter'];

function UpdateDialog() {
  return (
    <section
      role="dialog"
      aria-label="Update Driver Software"
      className="absolute top-[195px] left-[326px] flex h-[460px] w-[628px] flex-col rounded-[7px] border border-[#5e5e5e] bg-white/80 bg-linear-to-br from-transparent from-20% via-[#e5e5e5]/70 via-30% to-transparent to-40% px-[6px] pb-[6px] shadow-[0_1px_8px_rgba(0,0,0,0.45),inset_0_0_0_1px_#ffffffcc] backdrop-blur-[3px]"
    >
      <header className="flex h-[62px] shrink-0 items-end gap-2 pb-[6px] pl-[3px]">
        <button type="button" disabled aria-label="Back" className="flex size-6 items-center justify-center rounded-full border-2 border-[#a4abb0] bg-[#f7f8f9]">
          <svg viewBox="0 0 16 16" width="16" height="16">
            <path d="M2 8l6-5.500V6h6v4H8v3.500z" fill="#fff" stroke="#bfc4c8" />
          </svg>
        </button>
        <div className="flex h-6 items-center gap-[5px] pl-[2px]">
          <TowerIcon />
          <h2 className="text-[11px]">Update Driver Software - Intel(R) HD Graphics</h2>
        </div>
      </header>
      <div className="flex min-h-0 flex-1 flex-col border border-[#828282] bg-white">
        <div className="min-h-0 flex-1 px-[38px] pt-[18px] pr-[19px]">
          <h3 className="h-6 text-[15px] leading-6 whitespace-nowrap text-[#003399]">Select the device driver you want to install for this hardware.</h3>
          <div className="flex h-[82px] gap-6 pt-4">
            <BigDisplay />
            <p className="h-8 leading-[15px]">
              Select the manufacturer and model of your hardware device and then click Next. If you have a
              disk that contains the driver you want to install, click Have Disk.
            </p>
          </div>
          <label className="mt-[13px] flex h-5 items-center gap-[3px] text-[#6d6d6d]">
            <input type="checkbox" defaultChecked disabled className="peer sr-only" />
            <span className="flex size-[13px] items-center justify-center border border-[#b1b1b1] bg-white">
              <svg viewBox="0 0 9 9" width="9" height="9">
                <path d="M1 4.500L3.500 7.500 8 1" fill="none" stroke="#9a9a9a" strokeWidth="1.800" />
              </svg>
            </span>
            Show compatible hardware
          </label>
          <table className="mt-[3px] block h-[113px] w-[555px] border border-[#828790] bg-[#f0f0f0]">
            <thead className="block bg-linear-to-b from-white from-50% to-[#f7f8fa]">
              <tr className="flex h-[24px] items-center border-b border-[#d5d5d5] px-[7px]">
                <th className="font-normal">Model</th>
              </tr>
            </thead>
            <tbody className="block">
              {models.map((m, i) => (
                <tr key={m} className="flex h-[19px] pl-[5px]">
                  <td className="flex items-center">
                    <CertificateIcon selected={i === 0} />
                    <span className={i === 0 ? 'h-[19px] bg-[#3399ff] px-[2px] leading-[19px] text-white' : 'h-[19px] px-[2px] leading-[19px]'}>{m}</span>
                  </td>
                </tr>
              ))}
            </tbody>
          </table>
          <div className="mt-2 flex items-start gap-3">
            <span className="pt-[7px]">
              <CertificateIcon />
            </span>
            <div className="flex flex-1 flex-col pt-1">
              <span className="h-[22px] leading-[18px] text-[#8b8b8b]">This driver is digitally signed.</span>
              <a href="#signing" className="text-[#0066cc] underline">
                Tell me why driver signing is important
              </a>
            </div>
            <PushButton disabled className="mr-px h-6 w-[114px]">
              Have Disk...
            </PushButton>
          </div>
        </div>
        <footer className="flex h-[41px] shrink-0 items-center justify-end gap-[9px] border-t border-[#dfdfdf] bg-[#f0f0f0] pr-[11px]">
          <PushButton disabled className="h-[21px] w-[66px]">
            Next
          </PushButton>
          <PushButton className="h-[21px] w-[66px]">Cancel</PushButton>
        </footer>
      </div>
    </section>
  );
}

function InstallDialog() {
  return (
    <section
      role="dialog"
      aria-label="Install From Disk"
      className="absolute top-[319px] left-[421px] flex h-[234px] w-[439px] flex-col rounded-[7px] border border-[#5e5e5e] bg-white/75 px-[6px] pb-[6px] shadow-[0_1px_8px_rgba(0,0,0,0.5),inset_0_0_0_1px_#ffffffcc] backdrop-blur-[3px]"
    >
      <h2 className="flex h-7 shrink-0 items-center pl-px text-[11px]">Install From Disk</h2>
      <div className="flex flex-1 flex-col border border-[#828282] bg-[#f0f0f0] pr-[11px] pl-[14px] font-['Liberation_Sans',Arial,sans-serif] text-[11px]">
        <div className="flex h-[140px] gap-3 pt-4">
          <FloppyDriveIcon />
          <p className="leading-[13px] whitespace-nowrap">
            Insert the manufacturer's installation disk, and
            <br />
            make sure that the correct drive is selected
          </p>
        </div>
        <div className="flex flex-col pl-12">
          <label htmlFor="copy-from" className="h-[21px] leading-[15px]">
            Copy manufacturer's files from:
          </label>
          <div className="flex items-center gap-[13px]">
            <span className="flex h-[21px] flex-1 items-center border border-[#e2e3ea] border-t-[#abadb3] bg-white pr-1">
              <input id="copy-from" defaultValue="A:\" className="w-full min-w-0 flex-1 bg-transparent px-[3px] outline-none" />
              <Down />
            </span>
            <PushButton primary className="h-[21px] w-[73px]">
              Browse...
            </PushButton>
          </div>
        </div>
      </div>
    </section>
  );
}

const places = [
  { label: 'Recent Places', icon: <BigRecent /> },
  { label: 'Desktop', icon: <BigDesktop /> },
  { label: 'Libraries', icon: <BigLibraries /> },
  { label: 'Computer', icon: <BigComputer /> },
  { label: 'Network', icon: <BigNetwork /> },
];

const files = [
  { name: 'Lang', date: '5/25/2012 11:24 AM', type: 'File folder', icon: <FolderIcon /> },
  { name: 'MediaSDK', date: '5/25/2012 11:24 AM', type: 'File folder', icon: <FolderIcon /> },
  { name: 'kit45406', date: '5/24/2012 7:21 AM', type: 'Setup Information', icon: <IniIcon /> },
];

function LocateDialog() {
  return (
    <section
      role="dialog"
      aria-label="Locate File"
      className="absolute top-[33px] left-[607px] flex h-[423px] w-[571px] flex-col rounded-[7px] border border-[#2b2b2b] bg-white/80 px-[6px] pb-[6px] shadow-[0_3px_14px_3px_rgba(0,0,0,0.7),inset_0_0_0_1px_#ffffffcc] backdrop-blur-[3px]"
    >
      <header className="-mx-[5px] flex h-7 shrink-0 items-center gap-[5px] rounded-t-[6px] bg-linear-to-r from-[#ebedf2] from-20% via-[#c9cbd8] via-40% to-[#dfe1eb] to-60% pr-[5px] pl-[7px]">
        <ManagementIcon />
        <h2 className="flex-1">Locate File</h2>
        <button
          type="button"
          aria-label="Close dialog"
          className="flex h-[19px] w-[47px] items-center justify-center self-start rounded-b-[4px] border border-t-0 border-[#5c1f1a] bg-linear-to-b from-[#e6a395] from-45% via-[#bd3a25] via-50% to-[#d6674d] shadow-[inset_0_0_0_1px_rgba(255,255,255,0.4)]"
        >
          <CloseGlyph />
        </button>
      </header>
      <div className="flex min-h-0 flex-1 flex-col border border-[#6e6e6e] bg-[#f0f0f0] pr-[6px] pl-[6px]">
        <div className="flex h-[36px] shrink-0 items-center pt-px pl-[48px]">
          <label htmlFor="look-in" className="w-[45px] text-[11px]">
            Look in:
          </label>
          <span className="relative flex h-[23px] w-[261px] items-center border border-[#e2e3ea] border-t-[#abadb3] bg-white pr-1 pl-[5px]">
            <FolderIcon />
            <select id="look-in" className="flex-1 appearance-none bg-transparent pl-[3px] font-['Liberation_Sans',Arial,sans-serif] text-[11px] outline-none">
              <option>Graphics</option>
            </select>
            <Down className="fill-black" />
          </span>
          <div className="flex items-center gap-[7px] pl-[15px]">
            <button type="button" aria-label="Go back"><BackOrb /></button>
            <button type="button" aria-label="Up"><UpLevelIcon /></button>
            <button type="button" aria-label="New folder"><NewFolderIcon /></button>
            <button type="button" aria-label="Views" className="flex items-center gap-px">
              <ViewsIcon />
              <Down className="fill-[#333]" />
            </button>
          </div>
        </div>
        <div className="flex min-h-0 flex-1 gap-[6px]">
          <nav className="mb-[11px] flex w-[87px] shrink-0 flex-col bg-[#f4f4f4] pt-[6px]">
            {places.map((p) => (
              <button key={p.label} type="button" className="flex h-[60px] flex-col items-center whitespace-nowrap">
                {p.icon}
                <span className="leading-[18px]">{p.label}</span>
              </button>
            ))}
          </nav>
          <div className="flex min-w-0 flex-1 flex-col">
            <div className="flex h-[283px] flex-col bg-white">
              <div className="min-h-0 flex-1 overflow-hidden">
                <table className="h-full w-[540px] table-fixed border-collapse">
                  <colgroup>
                    <col className="w-[271px]" />
                    <col className="w-[120px]" />
                    <col />
                  </colgroup>
                  <thead>
                    <tr className="h-[23px] text-left">
                      <th className="relative border border-t-0 border-[#96d9f9] bg-linear-to-b from-[#f2f9fc] from-40% to-[#dceefa] to-45% p-0 pt-px pl-[5px] font-normal">
                        Name
                        <svg viewBox="0 0 7 4" width="7" height="4" className="absolute top-px left-[132px]">
                          <path d="M0 4h7L3.500 0z" fill="#5b97b6" />
                        </svg>
                      </th>
                      <th className="border-r border-b border-[#d8dadc] bg-linear-to-b from-white from-40% to-[#f7f8fa] to-45% p-0 pt-px pl-[6px] font-normal">Date modified</th>
                      <th className="border-b border-[#d8dadc] bg-linear-to-b from-white from-40% to-[#f7f8fa] to-45% p-0 pt-px pl-[6px] font-normal">Type</th>
                    </tr>
                  </thead>
                  <tbody>
                    <tr className="h-px">
                      <td className="border-r border-[#edf3f9] p-0" />
                      <td className="border-r border-[#edf3f9] p-0" />
                      <td className="p-0" />
                    </tr>
                    {files.map((f) => (
                      <tr key={f.name} className="h-[19px] whitespace-nowrap">
                        <td className="border-r border-[#edf3f9] p-0 pl-[23px]">
                          <span className="flex h-[19px] items-center gap-[3px]">
                            {f.icon}
                            {f.name}
                          </span>
                        </td>
                        <td className="border-r border-[#edf3f9] p-0 pl-[6px] text-[11px]">{f.date}</td>
                        <td className="p-0 pl-[6px] text-[11px]">{f.type}</td>
                      </tr>
                    ))}
                    <tr>
                      <td className="border-r border-[#edf3f9]" />
                      <td className="border-r border-[#edf3f9]" />
                      <td />
                    </tr>
                  </tbody>
                </table>
              </div>
              <ScrollBar thumb="w-[76%]" />
            </div>
            <div className="flex justify-between pt-[9px] pl-[2px] font-['Liberation_Sans',Arial,sans-serif] text-[11px]">
              <div className="grid grid-cols-[94px_246px] items-center gap-y-[5px]">
                <label htmlFor="file-name">File name:</label>
                <span className="flex h-[22px] items-center border border-[#e2e3ea] border-t-[#abadb3] bg-white pr-1">
                  <input id="file-name" defaultValue="kit45406.inf" className="w-full min-w-0 flex-1 bg-transparent px-[2px] outline-none" />
                  <Down />
                </span>
                <label htmlFor="file-type">Files of type:</label>
                <span className="flex h-[21px] items-center rounded-[2px] border border-[#adb2b5] bg-[#f0f0f0] pr-1">
                  <select id="file-type" disabled className="flex-1 appearance-none bg-transparent pl-[3px] text-[#6d6d6d] opacity-100 outline-none">
                    <option>Setup Information (*.inf)</option>
                  </select>
                  <Down className="fill-[#9a9a9a]" />
                </span>
              </div>
              <div className="flex flex-col gap-[5px] pt-px pr-px">
                <PushButton primary className="h-[21px] w-[73px]">
                  Open
                </PushButton>
                <PushButton className="h-[21px] w-[73px]">Cancel</PushButton>
              </div>
            </div>
            <svg viewBox="0 0 9 9" width="9" height="9" className="mt-auto self-end" aria-hidden="true">
              <path d="M6 0h2v2H6zM3 3h2v2H3zM6 3h2v2H6zM0 6h2v2H0zM3 6h2v2H3zM6 6h2v2H6z" fill="#bdbdbd" />
            </svg>
          </div>
        </div>
      </div>
    </section>
  );
}

export default function App() {
  return (
    <div className="relative h-screen w-full overflow-hidden bg-[#f0f0f0] font-['Open_Sans','Noto_Sans',sans-serif] text-[12px] leading-[16px] text-black">
      <MainWindow />
      <UpdateDialog />
      <InstallDialog />
      <LocateDialog />
    </div>
  );
}
